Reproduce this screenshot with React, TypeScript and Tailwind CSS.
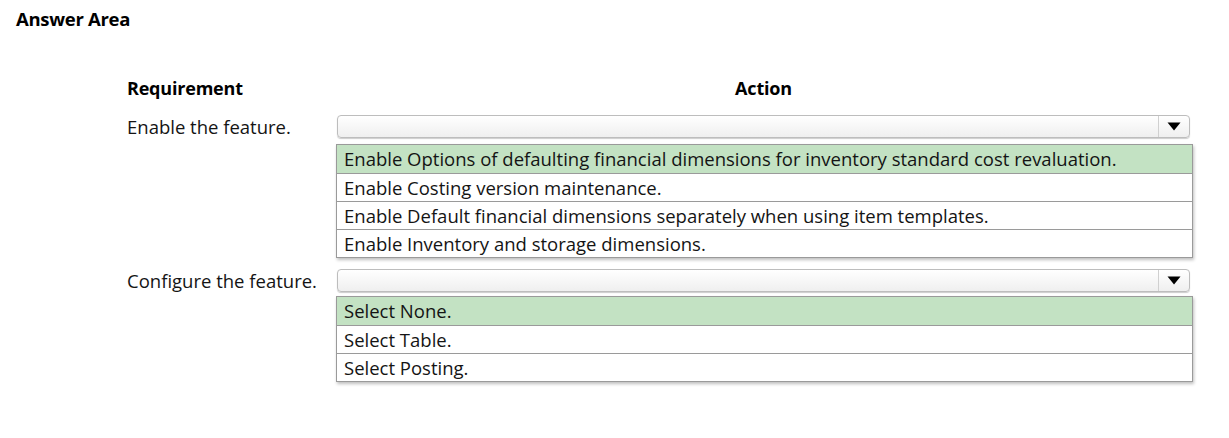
import React from "react";

const font = { fontFamily: '"Open Sans", "Noto Sans", sans-serif' };

function Box() {
  return (
    <div className="flex h-[23px] w-[853px] rounded-[4px] border border-[#bdbdbd] bg-gradient-to-b from-white to-[#efefef] shadow-[0_1px_1px_rgba(0,0,0,0.2)]">
      <div className="flex-1" />
      <div className="flex w-[31px] items-center justify-center border-l border-[#d0d0d0]">
        <svg width="14" height="9" viewBox="0 0 14 9">
          <path d="M0.5 0.5 L13.5 0.5 L7 8.5 Z" fill="#000" />
        </svg>
      </div>
    </div>
  );
}

function List({ items }: { items: string[] }) {
  return (
    <div className="w-[857px] border border-[#9a9a9a] bg-white shadow-[1px_2px_3px_rgba(0,0,0,0.25)]">
      {items.map((t, i) => (
        <div
          key={i}
          className={
            "flex h-[28px] items-center px-[7px] text-[18.5px] text-[#141414] " +
            (i === 0 ? "bg-[#c3e2c3] text-[#1c361c] " : "border-t border-[#9a9a9a] ")
          }
        >
          {t}
        </div>
      ))}
    </div>
  );
}

export default function App() {
  return (
    <div className="relative h-[438px] w-[1229px] bg-white" style={font}>
      <div className="pl-[16px] pt-[8px] text-[18.5px] font-bold leading-[22px] tracking-[-0.3px] text-black">
        Answer Area
      </div>
      <div className="ml-[127px] mt-[46px] flex flex-col">
        <div className="flex h-[24px] items-center">
          <div className="w-[210px] text-[18px] font-bold tracking-[-0.2px] text-black">Requirement</div>
          <div className="w-[853px] text-center text-[18px] font-bold tracking-[-0.2px] text-black">Action</div>
        </div>
        <div className="mt-[15px] flex">
          <div className="w-[210px] pt-[1px] text-[18.5px] leading-[22px] text-[#141414]">Enable the feature.</div>
          <div className="flex flex-col">
            <Box />
            <div className="mt-[6px] -ml-[1px]">
              <List
                items={[
                  "Enable Options of defaulting financial dimensions for inventory standard cost revaluation.",
                  "Enable Costing version maintenance.",
                  "Enable Default financial dimensions separately when using item templates.",
                  "Enable Inventory and storage dimensions.",
                ]}
              />
            </div>
          </div>
        </div>
        <div className="mt-[11px] flex">
          <div className="w-[210px] pt-[1px] text-[18.5px] leading-[22px] text-[#141414]">Configure the feature.</div>
          <div className="flex flex-col">
            <Box />
            <div className="mt-[4px] -ml-[1px]">
              <List items={["Select None.", "Select Table.", "Select Posting."]} />
            </div>
          </div>
        </div>
      </div>
    </div>
  );
}
